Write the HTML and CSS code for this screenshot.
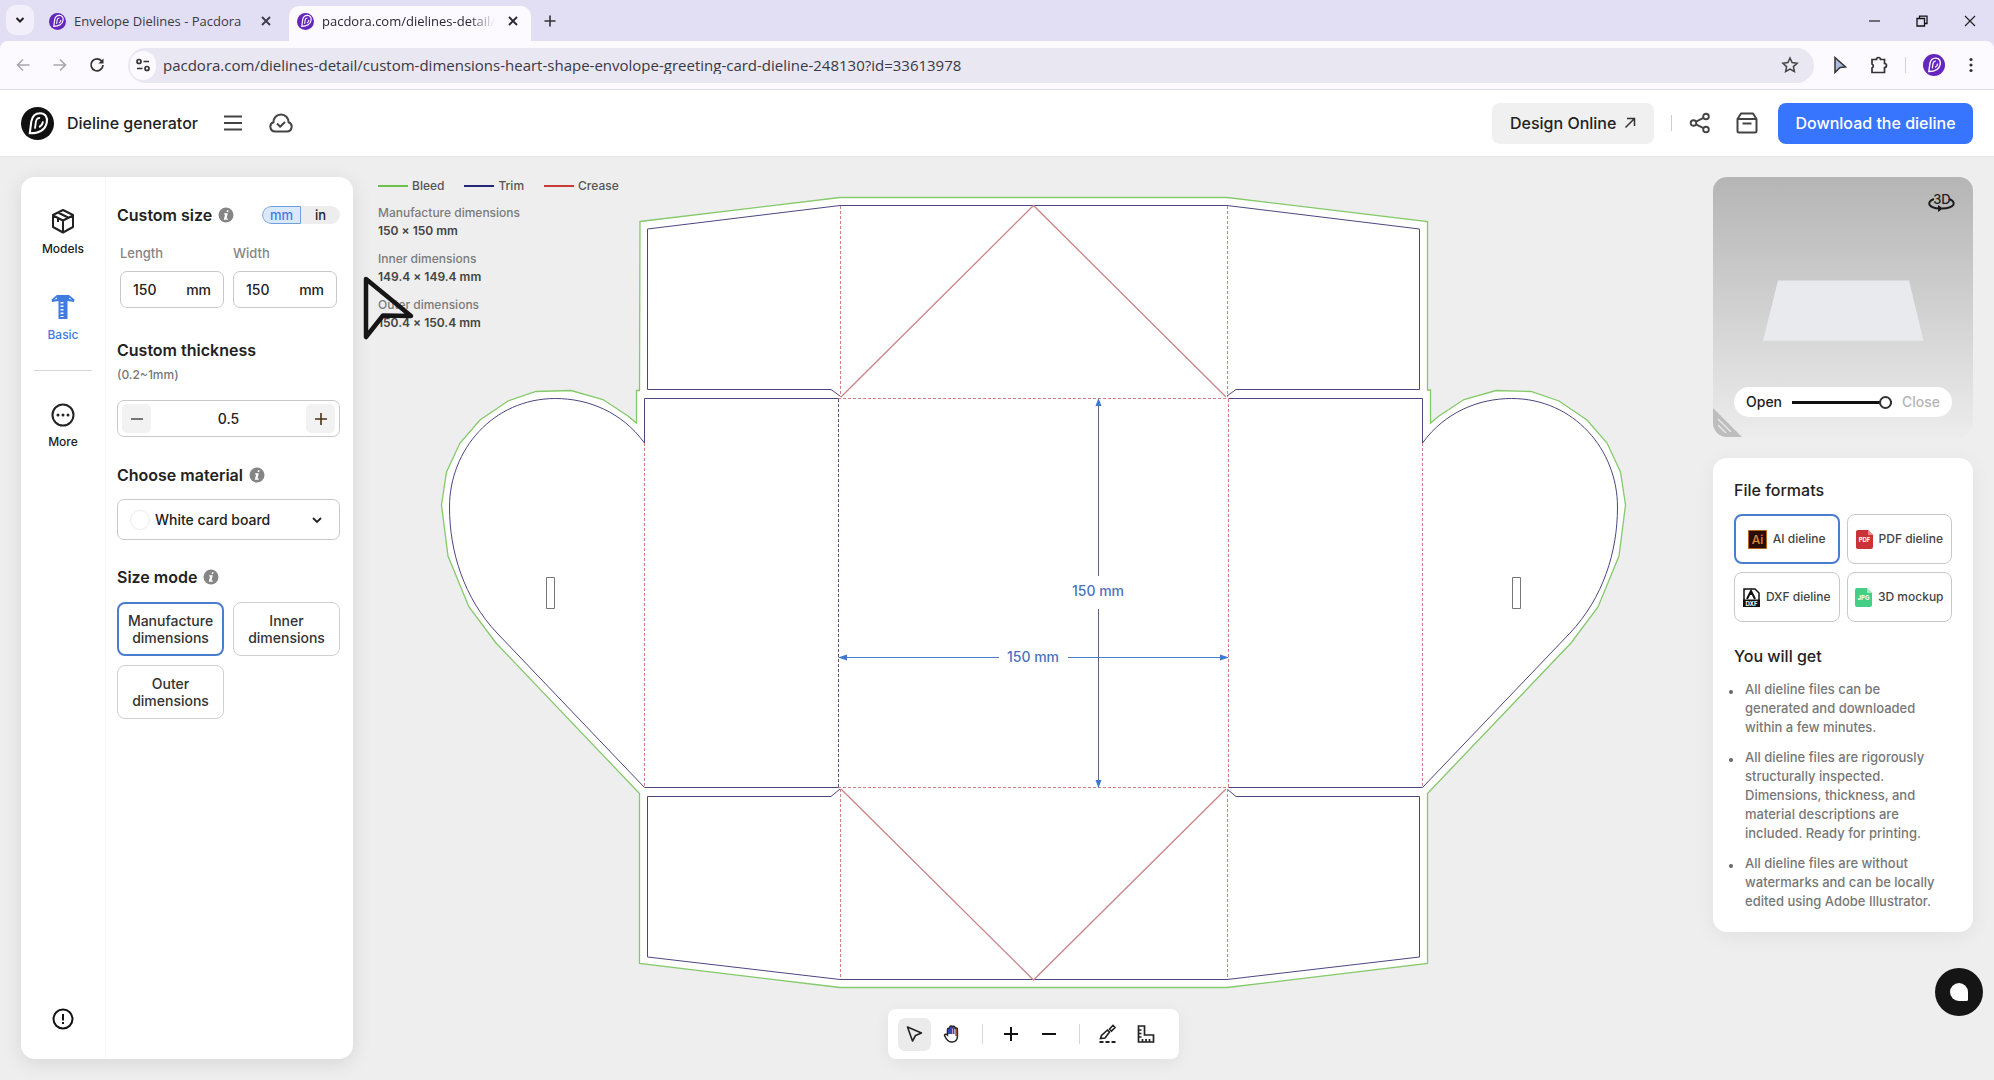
FILE: index.html
```html
<!DOCTYPE html>
<html lang="en">
<head>
<meta charset="utf-8">
<meta name="viewport" content="width=device-width, initial-scale=1">
<title>Dieline generator</title>
<link rel="stylesheet" href="styles.css">
</head>
<body>
<svg class="defs" width="0" height="0" aria-hidden="true">
  <symbol id="brand" viewBox="0 0 32 32">
    <path d="M8.500 25.500L10 14C11 8.500 14.500 6 18.500 6c5 0 7.500 4 6.500 9-1.200 6-6.500 10.500-16.500 10.500z" fill="none" stroke="currentColor" stroke-width="2"/>
    <path d="M13.500 21l1-7c.5-2.500 2-3.500 4-3.500M17.500 19.500c2.300-1 3.500-2.800 3.800-5.500" fill="none" stroke="currentColor" stroke-width="1.800"/>
  </symbol>
  <symbol id="info" viewBox="0 0 16 16">
    <circle cx="8" cy="8" r="7.500" fill="#858585"/>
    <path d="M9 3.200h1.600l-.4 1.900H8.600zM6.200 6.300h3.600l-1.300 5.200h1.300v1.200H5.800L7.100 7.500H6z" fill="#fff"/>
  </symbol>
  <symbol id="x" viewBox="0 0 12 12"><path d="M2 2l8 8M10 2l-8 8" fill="none" stroke="currentColor" stroke-width="1.800"/></symbol>
</svg>

<header class="browser">
  <div class="tabs">
    <button class="tab-search" aria-label="Search tabs"><svg width="12" height="12" viewBox="0 0 12 12"><path d="M2.500 4L6 7.500 9.500 4" fill="none" stroke="#222" stroke-width="2"/></svg></button>
    <div class="tab">
      <span class="favicon"><svg width="18" height="18"><use href="#brand"/></svg></span>
      <span class="tab-title">Envelope Dielines - Pacdora</span>
      <button class="plain" aria-label="Close tab"><svg width="12" height="12"><use href="#x"/></svg></button>
    </div>
    <div class="tab tab-active">
      <span class="favicon"><svg width="18" height="18"><use href="#brand"/></svg></span>
      <span class="tab-title">pacdora.com/dielines-detail/</span>
      <button class="plain" aria-label="Close tab"><svg width="12" height="12"><use href="#x"/></svg></button>
    </div>
    <button class="plain new-tab" aria-label="New tab"><svg width="14" height="14" viewBox="0 0 14 14"><path d="M7 1.500v11M1.500 7h11" stroke="#333" stroke-width="1.600"/></svg></button>
    <div class="window-controls">
      <button class="plain" aria-label="Minimize"><svg width="12" height="12" viewBox="0 0 12 12"><path d="M1 6h11" stroke="#222" stroke-width="1.200"/></svg></button>
      <button class="plain" aria-label="Restore"><svg width="12" height="12" viewBox="0 0 12 12"><path d="M1 3.500h7.500V11H1zM3.500 3.500V1.200H11V8.500H8.500" fill="none" stroke="#111" stroke-width="1.300"/></svg></button>
      <button class="plain" aria-label="Close"><svg width="12" height="12" viewBox="0 0 12 12"><path d="M1 1l10 10M11 1L1 11" stroke="#222" stroke-width="1.200"/></svg></button>
    </div>
  </div>
  <div class="toolbar">
    <div class="nav">
      <button class="plain" aria-label="Back"><svg width="16" height="16" viewBox="0 0 16 16"><path d="M14.500 8H2.500M8 2.500L2.500 8 8 13.500" fill="none" stroke="#a9a6b0" stroke-width="1.600"/></svg></button>
      <button class="plain" aria-label="Forward"><svg width="16" height="16" viewBox="0 0 16 16"><path d="M1.500 8h12M8 2.500L13.500 8 8 13.500" fill="none" stroke="#a9a6b0" stroke-width="1.600"/></svg></button>
      <button class="plain" aria-label="Reload"><svg width="16" height="16" viewBox="0 0 16 16"><path d="M13 4.500A6 6 0 1 0 14 8" fill="none" stroke="#333" stroke-width="1.700"/><path d="M14.500 1.500v5h-5z" fill="#333"/></svg></button>
    </div>
    <div class="address">
      <button class="site-info" aria-label="Site information"><svg width="16" height="16" viewBox="0 0 16 16" fill="none" stroke="#333" stroke-width="1.700"><circle cx="4" cy="4.500" r="2"/><path d="M8.500 4.500H14M2 11.500h5.500"/><circle cx="12" cy="11.500" r="2"/></svg></button>
      <input class="url" aria-label="Address" value="pacdora.com/dielines-detail/custom-dimensions-heart-shape-envolope-greeting-card-dieline-248130?id=33613978">
      <button class="plain" aria-label="Bookmark"><svg width="18" height="18" viewBox="0 0 18 18"><path d="M9 2l2.100 4.600 5 .6-3.700 3.400 1 4.900L9 13l-4.400 2.500 1-4.900L1.900 7.200l5-.6z" fill="none" stroke="#444" stroke-width="1.500"/></svg></button>
    </div>
    <div class="extensions">
      <button class="plain" aria-label="Pointer extension"><svg width="18" height="18" viewBox="0 0 18 18"><path d="M4 1.500l10.500 9.500-5.500.5-5 5z" fill="#aebbe0" stroke="#333" stroke-width="1.500"/></svg></button>
      <button class="plain" aria-label="Extensions"><svg width="18" height="18" viewBox="0 0 18 18"><path d="M2 3.500h4.500a2 2 0 0 1 4 0H14.500v4a2 2 0 0 1 0 4v5H2v-4.500a2.200 2.200 0 0 0 0-4z" fill="none" stroke="#333" stroke-width="1.700"/></svg></button>
      <span class="ext-rule"></span>
      <span class="favicon favicon-big"><svg width="22" height="22"><use href="#brand"/></svg></span>
      <button class="plain browser-menu" aria-label="Browser menu"><svg width="18" height="18" viewBox="0 0 18 18" fill="#333"><circle cx="9" cy="3.500" r="1.600"/><circle cx="9" cy="9" r="1.600"/><circle cx="9" cy="14.500" r="1.600"/></svg></button>
    </div>
  </div>
</header>

<header class="app-header">
  <span class="logo"><svg width="33" height="33"><use href="#brand"/></svg></span>
  <h1 class="app-name">Dieline generator</h1>
  <button class="plain menu-button" aria-label="Menu"><svg width="18" height="16" viewBox="0 0 18 16"><path d="M0 1.500h18M0 8h18M0 14.500h18" stroke="#444" stroke-width="2"/></svg></button>
  <button class="plain" aria-label="Saved"><svg width="24" height="20" viewBox="0 0 24 20" fill="none" stroke="#444" stroke-width="2" stroke-linejoin="round"><path d="M6 18.500a4.800 4.800 0 0 1-1.500-9.300C4.500 5 7.500 1.500 12 1.500S19.500 5 19.500 9.200A4.800 4.800 0 0 1 18 18.500z"/><path d="M8 10.500l3.200 3.200L16 9"/></svg></button>
  <div class="header-actions">
    <a class="design-link" href="#design">Design Online <svg width="12" height="12" viewBox="0 0 12 12"><path d="M1.500 10.500l9-9M3 1.500h7.500V9" fill="none" stroke="#333" stroke-width="1.500"/></svg></a>
    <span class="head-rule"></span>
    <button class="plain" aria-label="Share"><svg width="22" height="22" viewBox="0 0 22 22" fill="none" stroke="#444" stroke-width="1.900"><circle cx="4.500" cy="11" r="2.800"/><circle cx="17" cy="4.500" r="2.800"/><circle cx="17" cy="17.500" r="2.800"/><path d="M7 9.600l7.500-3.800M7 12.400l7.500 3.800"/></svg></button>
    <button class="plain box-button" aria-label="My files"><svg width="22" height="22" viewBox="0 0 22 22" fill="none" stroke="#444" stroke-width="2" stroke-linejoin="round"><path d="M1.500 7L5 1.500h12L20.500 7v12a1.500 1.500 0 0 1-1.500 1.500H3A1.500 1.500 0 0 1 1.500 19zM1.500 7h19M6.500 11.500h9"/></svg></button>
    <button class="download">Download the dieline</button>
  </div>
</header>

<main class="workspace">
  <section class="panel">
    <nav class="side-nav" aria-label="Editor sections">
      <a class="side-item" href="#models"><svg width="24" height="26" viewBox="0 0 24 26" fill="none" stroke="#222" stroke-width="2" stroke-linejoin="round"><path d="M12 2l10 5v12l-10 5.500L2 19V7zM2 7.500l10 5 10-5M12 12.500v12M7 4.500l10 5M7 10v4"/></svg>Models</a>
      <a class="side-item side-active" href="#basic"><svg width="26" height="26" viewBox="0 0 26 26"><path d="M7 1h12l5.500 4.500L24 8l-6.500-1v18h-9V7L2 8l-.5-2.500z" fill="#3f7be0"/><path d="M4 5.500l3-2v1.500zM22 5.500l-3-2v1.500z" fill="#fff"/><path d="M12 8v15" stroke="#fff" stroke-width="3" stroke-dasharray="1.500 2"/></svg>Basic</a>
      <hr class="side-rule">
      <a class="side-item" href="#more"><svg width="24" height="24" viewBox="0 0 24 24"><circle cx="12" cy="12" r="10.500" fill="none" stroke="#222" stroke-width="2"/><g fill="#222"><circle cx="7" cy="12" r="1.500"/><circle cx="12" cy="12" r="1.500"/><circle cx="17" cy="12" r="1.500"/></g></svg>More</a>
      <button class="plain side-help" aria-label="Help"><svg width="22" height="22" viewBox="0 0 22 22"><circle cx="11" cy="11" r="9.500" fill="none" stroke="#111" stroke-width="2"/><path d="M11 6v6.500M11 14v2" stroke="#111" stroke-width="2"/></svg></button>
    </nav>
    <form class="settings">
      <div class="row">
        <h2>Custom size</h2>
        <svg class="info" width="16" height="16"><use href="#info"/></svg>
        <div class="units">
          <label class="unit"><input type="radio" name="unit" checked><span>mm</span></label>
          <label class="unit"><input type="radio" name="unit"><span>in</span></label>
        </div>
      </div>
      <div class="sizes">
        <label class="field">Length<span class="field-box"><input value="150"><span>mm</span></span></label>
        <label class="field">Width<span class="field-box"><input value="150"><span>mm</span></span></label>
      </div>
      <h2 id="thick">Custom thickness</h2>
      <p class="hint">(0.2~1mm)</p>
      <div class="stepper">
        <button type="button" aria-label="Decrease"><svg width="12" height="12" viewBox="0 0 12 12"><path d="M0 6h12" stroke="#555" stroke-width="1.600"/></svg></button>
        <input value="0.5" aria-labelledby="thick">
        <button type="button" aria-label="Increase"><svg width="12" height="12" viewBox="0 0 12 12"><path d="M0 6h12M6 0v12" stroke="#4a3218" stroke-width="1.600"/></svg></button>
      </div>
      <div class="row"><h2 id="mat">Choose material</h2><svg class="info" width="16" height="16"><use href="#info"/></svg></div>
      <div class="material">
        <span class="swatch"></span>
        <select aria-labelledby="mat"><option>White card board</option></select>
        <svg class="chevron" width="12" height="12" viewBox="0 0 12 12"><path d="M2 4l4 4 4-4" fill="none" stroke="#222" stroke-width="1.800"/></svg>
      </div>
      <div class="row"><h2>Size mode</h2><svg class="info" width="16" height="16"><use href="#info"/></svg></div>
      <div class="modes">
        <button type="button" class="mode chosen">Manufacture dimensions</button>
        <button type="button" class="mode">Inner dimensions</button>
        <button type="button" class="mode">Outer dimensions</button>
      </div>
    </form>
  </section>

  <section class="stage">
    <div class="legend">
      <ul class="keys">
        <li class="key-bleed">Bleed</li>
        <li class="key-trim">Trim</li>
        <li class="key-crease">Crease</li>
      </ul>
      <dl class="measures">
        <dt>Manufacture dimensions</dt><dd>150 × 150 mm</dd>
        <dt>Inner dimensions</dt><dd>149.4 × 149.4 mm</dd>
        <dt>Outer dimensions</dt><dd>150.4 × 150.4 mm</dd>
      </dl>
    </div>
    <svg class="dieline" viewBox="433 187 1200 812" role="img" aria-label="Envelope dieline, 150 by 150 millimetres">
      <path class="bleed" d="M640 221.500L840 197.500H1227L1427.500 221.500V390H1430.500V423L1439 416 1464 399.500 1496 390.500 1531 391.500 1559 401 1587 420 1607 443 1620.500 472 1625.500 505 1619 556 1598 607 1571 643 1427.500 793.500V963.500L1227 987.500H840L639.500 963.500V793.500L496 643 469 607 448 556 441.500 505 446.500 472 460 443 480 420 508 401 536 391.500 571 390.500 603 399.500 628 416 636.500 423V390.500H639.500z"/>
      <g class="trim">
        <path d="M840 396L831 389.500H647.500V229L840 205.500H1227L1419.500 229V389.500H1236L1227 396"/>
        <path d="M840 789L831 796.500H647.500V957L840 979.500H1227L1419.500 957V796.500H1236L1227 789"/>
        <path d="M838.500 398.500H644.500V443C622 412 588 398.500 555.500 398.500C493 398.500 449.500 450 449.500 507C449.500 552 464 598 497 633L644.500 787.500H838.500"/>
        <path d="M1228.500 398.500H1422.500V443C1445 412 1479 398.500 1511.500 398.500C1574 398.500 1617.500 450 1617.500 507C1617.500 552 1603 598 1570 633L1422.500 787.500H1228.500"/>
      </g>
      <path class="slot" d="M546.500 577.500h8v31h-8zM1512.500 577.500h8v31h-8z"/>
      <path class="crease dashed" d="M840.500 206V397M1227.500 206V397M838 398.500H1229M1228.500 399V787M644.500 443V787M1422.500 443V787M838 787.500H1229M840.500 789V979M1227.500 789V979"/>
      <path class="crease-dark dashed" d="M838.500 399V787"/>
      <path class="crease folds" d="M841 397L1033.500 205.500 1226 397M841 789L1033.500 980 1226 789"/>
      <path class="dim-dark" d="M1098.500 402V576M1098.500 609V784"/>
      <path class="dim" d="M842 657.500H999M1068 657.500H1224"/>
      <path class="dim-head" d="M1098.500 398l3 8h-6zM1098.500 788l3-8h-6zM838 657.500l9-3v6zM1229 657.500l-9-3v6z"/>
      <text class="dim-text" x="1098" y="596">150 mm</text>
      <text class="dim-text" x="1033" y="662">150 mm</text>
    </svg>
    <div class="tools" role="toolbar" aria-label="Canvas tools">
      <button class="tool tool-on" aria-label="Select"><svg width="20" height="20" viewBox="0 0 20 20"><path d="M3.500 3l14 6-6 2.500L8.500 17z" fill="none" stroke="#222" stroke-width="1.600" stroke-linejoin="round"/></svg></button>
      <button class="tool" aria-label="Pan"><svg width="20" height="20" viewBox="0 0 20 20"><path d="M5.500 11V5.500a1.200 1.200 0 0 1 2.400 0V3a1.300 1.300 0 0 1 2.500 0v0a1.300 1.300 0 0 1 2.500.5v1.500a1.300 1.300 0 0 1 2.500 0V13a5 5 0 0 1-5 5h-1C6 18 4.500 16 2.500 11.500c0-1.500 2-1.500 3-.5z" fill="#fff" stroke="#222" stroke-width="1.500"/><path d="M7 5v5M9 3v7" stroke="#3346b8" stroke-width="2"/><path d="M11.500 3v7" stroke="#5b4a86" stroke-width="2"/><path d="M14.300 5v7" stroke="#a14b3b" stroke-width="2"/></svg></button>
      <span class="tool-rule"></span>
      <button class="tool" aria-label="Zoom in"><svg width="16" height="16" viewBox="0 0 16 16"><path d="M1 8h14M8 1v14" stroke="#111" stroke-width="2"/></svg></button>
      <button class="tool" aria-label="Zoom out"><svg width="16" height="16" viewBox="0 0 16 16"><path d="M1 8h14" stroke="#111" stroke-width="2"/></svg></button>
      <span class="tool-rule"></span>
      <button class="tool" aria-label="Cut line"><svg width="20" height="20" viewBox="0 0 20 20" fill="none" stroke="#222" stroke-width="1.600"><path d="M2.500 14.500l1-3 6-5.500 2 2-4.500 6zM11.500 5l3.500-3.500 2 2L13.500 7z"/><path d="M1.500 18h4M7.500 18h4M13.500 18h4" stroke-width="2"/></svg></button>
      <button class="tool" aria-label="Measure"><svg width="20" height="20" viewBox="0 0 20 20" fill="none" stroke="#222" stroke-width="1.700"><path d="M2.500 2h6v9h9v7h-15zM3 6h2.500M3 9.500h2.500M3 13h2.500M6.500 17.500V15M10 17.500V15M13.500 17.500V15"/></svg></button>
    </div>
    <svg class="pointer" width="54" height="68" viewBox="0 0 54 68"><path d="M5 5l45 37-28-.5L5 63z" fill="none" stroke="#161616" stroke-width="4.500" stroke-linejoin="round"/></svg>
  </section>

  <aside class="side">
    <section class="preview" aria-label="3D preview">
      <svg class="preview-art" viewBox="0 0 260 260" aria-hidden="true">
        <path d="M65 103.500H196L210.500 164H50z" fill="#e9eaee"/>
        <path d="M50 164H210.500" stroke="#dcdde0"/>
        <path d="M0 231l29 29H0z" fill="#bdbdbd"/>
        <path d="M5 242l13 13M5 248l8 8" stroke="#e6e6e6" stroke-width="1.500"/>
        <path d="M221 22c-8 3-6 9 6 9.500M236 22c8 3 6 9-7 9.500" fill="none" stroke="#1b1b1b" stroke-width="2"/>
        <path d="M225 28l5 3.500-5 3.500z" fill="#1b1b1b"/>
        <text class="art-3d" x="229" y="27">3D</text>
      </svg>
      <div class="fold"><label for="fold">Open</label><input id="fold" type="range" min="0" max="100" value="100"><span>Close</span></div>
    </section>
    <section class="formats">
      <h2>File formats</h2>
      <div class="format-grid">
        <button class="format chosen"><svg width="19" height="19" viewBox="0 0 19 19"><path d="M.5.5h18v18H.5z" fill="#2a0c02" stroke="#b5651d"/><text class="badge-ai" x="9.500" y="14">Ai</text></svg>AI dieline</button>
        <button class="format"><svg width="17" height="19" viewBox="0 0 17 19"><path d="M2 0h10l5 5v12a2 2 0 0 1-2 2H2a2 2 0 0 1-2-2V2a2 2 0 0 1 2-2z" fill="#cb3237"/><path d="M12 0l5 5h-5z" fill="#e98a8c"/><text class="badge" x="8.500" y="12">PDF</text></svg>PDF dieline</button>
        <button class="format"><svg width="17" height="19" viewBox="0 0 17 19"><path d="M1 1h11l4 4v13H1z" fill="#fff" stroke="#111" stroke-width="1.500"/><path d="M4 11L8 3l4 8M8 3v4" fill="none" stroke="#111" stroke-width="2"/><path d="M0 11.500h17V19H0z" fill="#111"/><text class="badge" x="8.500" y="18">DXF</text></svg>DXF dieline</button>
        <button class="format"><svg width="17" height="19" viewBox="0 0 17 19"><path d="M2 0h10l5 5v12a2 2 0 0 1-2 2H2a2 2 0 0 1-2-2V2a2 2 0 0 1 2-2z" fill="#45cf86"/><path d="M12 0l5 5h-5z" fill="#a6edc6"/><text class="badge" x="8.500" y="12">JPG</text></svg>3D mockup</button>
      </div>
      <h2>You will get</h2>
      <ul class="perks">
        <li>All dieline files can be<br>generated and downloaded<br>within a few minutes.</li>
        <li>All dieline files are rigorously<br>structurally inspected.<br>Dimensions, thickness, and<br>material descriptions are<br>included. Ready for printing.</li>
        <li>All dieline files are without<br>watermarks and can be locally<br>edited using Adobe Illustrator.</li>
      </ul>
    </section>
  </aside>
</main>
<button class="chat" aria-label="Chat"><svg width="22" height="22" viewBox="0 0 22 22"><path d="M11 2a9 9 0 0 1 9 9v7.500a1.500 1.500 0 0 1-1.500 1.500H11a9 9 0 0 1 0-18z" fill="#fff"/></svg></button>
</body>
</html>
```
FILE: styles.css
```css
* { box-sizing: border-box; }
body {
  margin: 0;
  min-height: 100vh;
  display: flex;
  flex-direction: column;
  position: relative;
  background: #eee;
  color: #222;
  font: 500 14px/18px Inter, "Liberation Sans", sans-serif;
}
h1, h2, p, ul, dl, dd { margin: 0; padding: 0; }
button, input, select { font: inherit; color: inherit; }
svg { display: block; flex: none; }
a { color: inherit; text-decoration: none; }
.defs { position: absolute; }
.plain { display: flex; padding: 0; border: 0; background: none; }

/* Browser chrome */
.browser { font: 400 13px/18px "Open Sans", "Noto Sans", sans-serif; background: #e2dff5; }
.tabs { display: flex; align-items: flex-end; height: 41px; padding-left: 6px; }
.tab-search {
  display: flex; align-items: center; justify-content: center;
  width: 28px; height: 30px; margin-bottom: 6px; padding: 0;
  border: 0; border-radius: 10px; background: #f2effb;
}
.tab { display: flex; align-items: center; gap: 8px; width: 247px; height: 35px; padding: 0 9px 5px 15px; color: #3b3946; }
.tab-active { width: 242px; padding-left: 8px; padding-right: 12px; margin-left: 8px; background: #fcf9ff; border-radius: 10px 10px 0 0; color: #2a2833; }
.tab-title { flex: 1; overflow: hidden; white-space: nowrap; }
.tab-active .tab-title { margin-right: 4px; mask-image: linear-gradient(90deg, #000 85%, transparent); }
.favicon {
  display: flex; align-items: center; justify-content: center; flex: none;
  width: 17px; height: 17px; border-radius: 50%;
  background: #6426bd; color: #fff;
}
.favicon-big { width: 22px; height: 22px; }
.new-tab { margin: 0 0 13px 12px; }
.window-controls { display: flex; gap: 36px; margin: 0 18px 14px auto; }
.toolbar {
  display: flex; align-items: center; height: 49px;
  padding: 0 14px 0 15px; background: #fcf9ff;
  border-radius: 8px 8px 0 0; border-bottom: 1px solid #dedce4;
}
.nav { display: flex; gap: 21px; width: 113px; }
.address { display: flex; align-items: center; flex: 1; height: 35px; padding: 0 15px 0 2px; border-radius: 18px; background: #e9e7f1; }
.site-info {
  display: flex; align-items: center; justify-content: center;
  width: 26px; height: 29px; padding: 0; border: 0; border-radius: 14px; background: #fcf9ff;
}
.url { flex: 1; min-width: 0; padding: 0; margin-left: 7px; border: 0; background: none; outline: 0; font-size: 15px; color: #3a3844; }
.extensions { display: flex; align-items: center; gap: 21px; margin-left: 17px; }
.ext-rule { width: 1px; height: 16px; margin: 0 -4px; background: #d5cfe2; }
.browser-menu { margin-left: -4px; }

/* App header */
.app-header { display: flex; align-items: center; height: 67px; padding: 0 21px; background: #fff; border-bottom: 1px solid #e8e8e8; }
.logo { display: flex; width: 33px; height: 33px; border-radius: 50%; background: #111; color: #fff; }
.app-name { margin-left: 13px; font-size: 16px; font-weight: 500; }
.menu-button { margin: 0 27px 0 26px; }
.header-actions { display: flex; align-items: center; margin-left: auto; font-size: 16px; }
.design-link {
  display: flex; align-items: center; justify-content: space-between;
  width: 162px; height: 41px; padding: 0 18px; border-radius: 8px; background: #f0f0f0;
}
.head-rule { width: 1px; height: 16px; margin: 0 17px; background: #ccc; }
.box-button { margin: 0 20px 0 25px; }
.download { width: 195px; height: 41px; padding: 0; border: 0; border-radius: 8px; background: #3875ff; color: #fff; }

/* Workspace */
.workspace { flex: 1; display: flex; padding: 20px 21px 21px; }
.panel { display: flex; width: 332px; flex: none; border-radius: 14px; background: #fff; box-shadow: 0 4px 20px rgba(0, 0, 0, .1); }
.side-nav { display: flex; flex-direction: column; align-items: center; flex: none; width: 85px; padding: 31px 0 29px; border-right: 1px solid #f8f8f8; }
.side-item { display: flex; flex-direction: column; align-items: center; gap: 6px; font-size: 12px; }
.side-item + .side-item { margin-top: 36px; }
.side-active { color: #3f7be0; }
.side-rule { width: 58px; height: 1px; margin: 26px 0 32px; border: 0; background: #d8d8d8; }
.side-help { margin-top: auto; }
.settings { flex: 1; min-width: 0; padding: 28px 13px 0 11px; }
h2 { font-size: 16px; line-height: 20px; font-weight: 600; }
.row { display: flex; align-items: center; gap: 6px; }
.units { display: flex; width: 78px; height: 18px; margin-left: auto; border-radius: 9px; background: #ededed; font-size: 13px; overflow: hidden; }
.unit { flex: 1; text-align: center; }
.unit input { position: absolute; opacity: 0; margin: 0; }
.unit span { display: block; line-height: 16px; border: 1px solid transparent; }
.unit input:checked + span { border-color: #6f9fdc; border-radius: 9px 0 0 9px; background: #d9e8fb; color: #3f7be0; }
.sizes { display: flex; gap: 9px; margin: 19px 3px 32px; }
.field { flex: 1; min-width: 0; color: #858585; font-size: 13px; }
.field-box { display: flex; align-items: center; height: 37px; margin-top: 9px; padding: 0 12px; border: 1px solid #c9c9c9; border-radius: 7px; color: #222; font-size: 14px; }
.field input { flex: 1; width: 0; padding: 0; border: 0; outline: 0; background: none; }
.hint { margin: 6px 0 16px; color: #777; font-size: 12px; }
.stepper { display: flex; align-items: center; height: 37px; margin-bottom: 28px; padding: 0 4px; border: 1px solid #c9c9c9; border-radius: 7px; }
.stepper button { display: flex; align-items: center; justify-content: center; width: 29px; height: 29px; padding: 0; border: 0; border-radius: 5px; background: #f2f2f2; }
.stepper input { flex: 1; min-width: 0; padding: 0; border: 0; outline: 0; text-align: center; background: none; }
.material { display: flex; align-items: center; height: 41px; margin: 14px 0 27px; padding: 0 16px 0 12px; border: 1px solid #c9c9c9; border-radius: 7px; }
.swatch { width: 20px; height: 20px; border: 1px solid #ececec; border-radius: 50%; }
.material select { flex: 1; min-width: 0; padding: 0; margin-left: 5px; border: 0; outline: 0; appearance: none; background: none; }
.modes { display: grid; grid-template-columns: 1fr 1fr; gap: 9px; margin-top: 15px; }
.mode { height: 54px; padding: 0; border: 1px solid #d0d0d0; border-radius: 8px; background: #fff; font-size: 14px; line-height: 17px; color: #333; }
.mode.chosen, .format.chosen { border: 2px solid #4a7dd0; }

.stage { position: relative; flex: 1; min-width: 0; display: flex; flex-direction: column; align-items: center; padding-top: 10px; }
.legend { position: absolute; left: 25px; top: 0; font-size: 12px; }
.keys { display: flex; gap: 20px; list-style: none; color: #555; }
.keys li { display: flex; align-items: center; gap: 4px; }
.keys li::before { content: ""; width: 30px; height: 2px; background: currentColor; }
.key-bleed::before { color: #6dc04b; }
.key-trim::before { color: #25257a; }
.key-crease::before { color: #c73a36; }
.measures { margin-top: 9px; color: #7b7b7b; }
.measures dd { margin-bottom: 10px; font-weight: 600; color: #444; }
.pointer { position: absolute; left: 8px; top: 97px; }
.dieline { width: 100%; max-width: 1200px; height: auto; }
.bleed { fill: #fff; stroke: #84c96a; stroke-width: 1.300; }
.trim { fill: none; stroke: #4b4680; }
.slot { fill: none; stroke: #777; }
.crease { fill: none; stroke: #d07f82; }
.folds { stroke: #c98489; stroke-width: 1.300; }
.crease-dark { fill: none; stroke: #67507a; }
.dashed { stroke-dasharray: 3 2; }
.dim { stroke: #4a7fd0; }
.dim-dark { stroke: #5b6880; }
.dim-head { fill: #4078cf; }
.dim-text { fill: #4b72c0; font-size: 14px; text-anchor: middle; }
.tools { display: flex; align-items: center; width: 291px; height: 50px; margin-top: 10px; padding: 0 16px 0 10px; border-radius: 8px; background: #fff; box-shadow: 0 4px 16px rgba(0, 0, 0, .06); }
.tool { display: flex; align-items: center; justify-content: center; width: 33px; height: 33px; margin-right: 5px; padding: 0; border: 0; border-radius: 7px; background: none; }
.tool-on { background: #ebebeb; }
.tool:last-child { margin-right: 0; }
.tool-rule { width: 1px; height: 20px; margin: 0 12px 0 8px; background: #d8d8d8; }

.side { display: flex; flex-direction: column; gap: 21px; width: 260px; flex: none; }
.preview { position: relative; border-radius: 14px; overflow: hidden; background: linear-gradient(#b5b5b5, #ececec); }
.preview-art { width: 100%; }
.art-3d { fill: #222; font-size: 13px; text-anchor: middle; }
.fold { position: absolute; left: 21px; right: 21px; bottom: 20px; display: flex; align-items: center; gap: 10px; height: 30px; padding: 0 12px; border-radius: 15px; background: #fff; color: #222; }
.fold span { color: #b5b5b5; }
.fold input { flex: 1; width: 0; height: 14px; margin: 0; appearance: none; background: linear-gradient(#111, #111) center / 100% 3px no-repeat; }
.fold input::-webkit-slider-thumb { appearance: none; width: 13px; height: 13px; border: 2px solid #333; border-radius: 50%; background: #fff; }
.formats { height: 474px; padding: 22px 21px; border-radius: 14px; background: #fff; box-shadow: 0 4px 20px rgba(0, 0, 0, .06); }
.formats h2 { font-weight: 500; }
.format-grid { display: grid; grid-template-columns: 1fr 1fr; gap: 8px 7px; margin: 14px 0 24px; }
.format { display: flex; align-items: center; justify-content: center; gap: 6px; height: 50px; padding: 0; border: 1px solid #c9c9c9; border-radius: 8px; background: #fff; font-size: 12px; color: #444; white-space: nowrap; }
.badge { fill: #fff; font-size: 6px; font-weight: 700; text-anchor: middle; }
.badge-ai { fill: #e08a3c; font-size: 12px; text-anchor: middle; }
.perks { margin-top: 14px; padding-left: 11px; color: #777; font-size: 13px; line-height: 19px; list-style: none; white-space: nowrap; }
.perks li { position: relative; margin-bottom: 11px; }
.perks li::before { content: ""; position: absolute; left: -16px; top: 10px; width: 4px; height: 4px; border-radius: 50%; background: #666; }
.chat { position: absolute; right: 11px; bottom: 64px; display: flex; align-items: center; justify-content: center; width: 48px; height: 48px; padding: 0; border: 0; border-radius: 50%; background: #151515; }
```
